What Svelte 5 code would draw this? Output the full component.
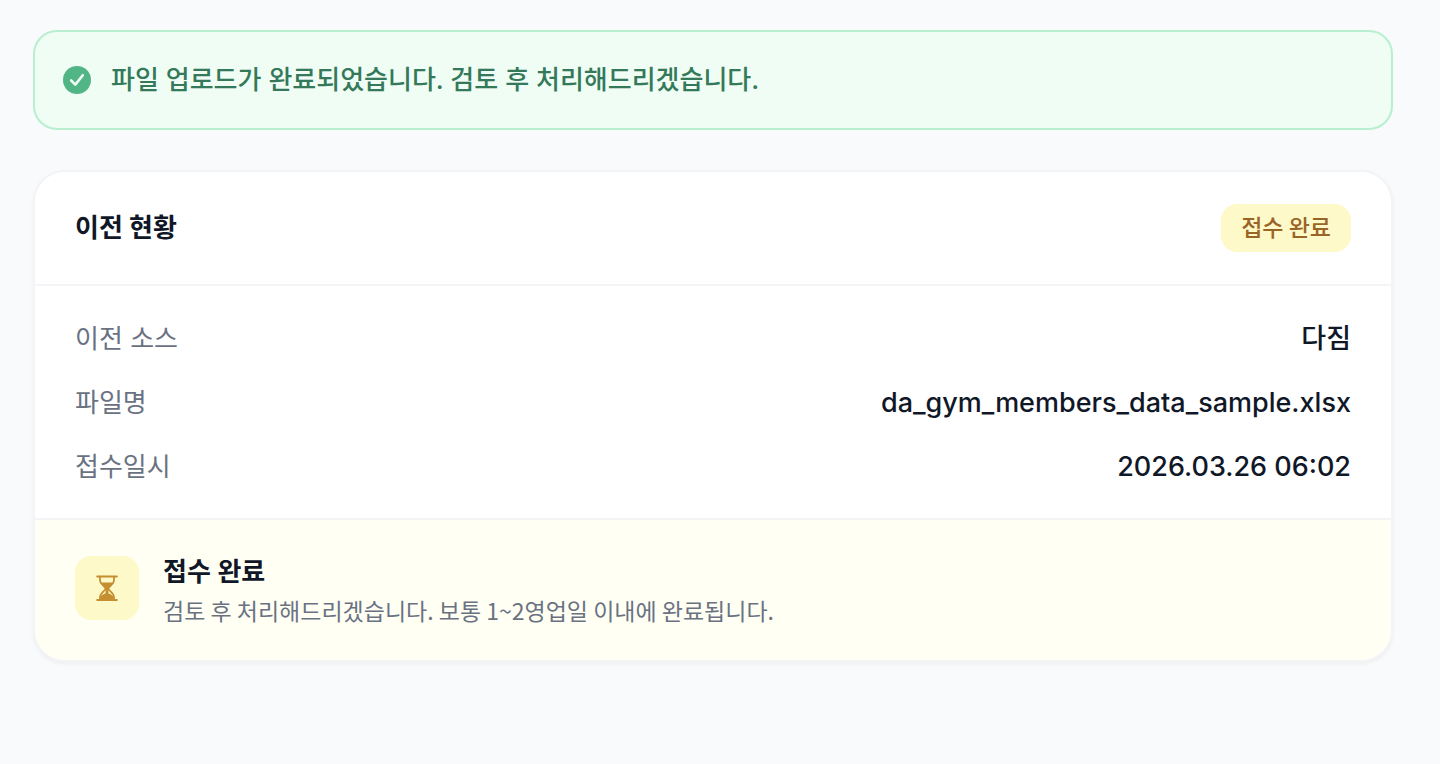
<script lang="ts">
    const status = "접수 완료";

    const rows = [
        { label: "이전 소스", value: "다짐" },
        { label: "파일명", value: "da_gym_members_data_sample.xlsx" },
        { label: "접수일시", value: "2026.03.26 06:02" },
    ];
</script>

<main>
    <div class="alert" role="status">
        <svg class="alert-icon" viewBox="0 0 28 28" aria-hidden="true">
            <circle cx="14" cy="14" r="14" fill="#52b585" />
            <path d="M8.200 14.500l4.100 4.100 7.500-9.400" fill="none" stroke="#f0fdf4" stroke-width="2.6" stroke-linecap="round" stroke-linejoin="round" />
        </svg>
        <p>파일 업로드가 완료되었습니다. 검토 후 처리해드리겠습니다.</p>
    </div>

    <section class="card">
        <header>
            <h2>이전 현황</h2>
            <span class="badge">{status}</span>
        </header>

        <dl>
            {#each rows as { label, value }}
                <div class="row">
                    <dt>{label}</dt>
                    <dd>{value}</dd>
                </div>
            {/each}
        </dl>

        <footer>
            <div class="tile">
                <svg viewBox="0 0 24 28" aria-hidden="true">
                    <path d="M2.2 2.500h19.6M2.2 26h19.6" fill="none" stroke="#c58e30" stroke-width="2" stroke-linecap="round" />
                    <path d="M5 3v3.500c0 4.500 5.500 5.500 5.500 8s-5.500 4-5.500 9v2.500M19 3v3.500c0 4.500-5.500 5.500-5.500 8s5.500 4 5.500 9v2.500" fill="none" stroke="#c58e30" stroke-width="1.8" />
                    <path d="M5.500 8.500h13c-1 3-4.500 4-5 6v5c3 .8 5 2 5.500 6H5c.5-4 2.500-5.200 5.500-6v-5c-.5-2-4-3-5-6z" fill="#c58e30" />
                </svg>
            </div>
            <div>
                <h3>{status}</h3>
                <p>검토 후 처리해드리겠습니다. 보통 1~2영업일 이내에 완료됩니다.</p>
            </div>
        </footer>
    </section>
</main>

<style>
    :global(body) {
        background: #f9fafc;
    }

    main {
        padding: 30px 47px 30px 33px;
        font-family: Inter, "Noto Sans CJK KR", sans-serif;
        font-size: 26px;
        line-height: 40px;
        color: #101828;
    }

    h2, h3, p, dl, dd {
        margin: 0;
    }

    .alert {
        display: flex;
        align-items: center;
        gap: 20px;
        padding: 28px;
        margin-bottom: 40px;
        border: 2px solid #b7efcf;
        border-radius: 24px;
        background: #f0fdf4;
        color: #34795a;
        font-weight: 500;
    }

    .alert-icon {
        width: 28px;
        height: 28px;
    }

    .card {
        overflow: hidden;
        border: 2px solid #f3f4f6;
        border-radius: 32px;
        background: white;
        box-shadow: 0 2px 4px rgba(0, 0, 0, 0.05);
    }

    header {
        display: flex;
        align-items: center;
        justify-content: space-between;
        padding: 32px 40px;
        border-bottom: 2px solid #f3f4f6;
    }

    h2, h3 {
        font-size: 26px;
        font-weight: 700;
    }

    h3 {
        font-weight: 600;
    }

    .badge, footer p {
        font-family: "Noto Sans CJK KR", sans-serif;
        font-size: 23px;
    }

    .badge {
        padding: 6px 20px 10px;
        border-radius: 16px;
        background: #fef9c8;
        color: #9a6427;
        font-weight: 500;
        line-height: 32px;
    }

    dl {
        display: flex;
        flex-direction: column;
        gap: 24px;
        padding: 33px 40px 31px;
    }

    .row {
        display: flex;
        justify-content: space-between;
    }

    dt {
        color: #6a7282;
    }

    dd {
        font-size: 27px;
        font-weight: 500;
    }

    footer {
        display: flex;
        align-items: flex-start;
        gap: 24px;
        padding: 32px 40px;
        border-top: 2px solid #f3f4f6;
        background: #fffff4;
    }

    .tile {
        display: flex;
        align-items: center;
        justify-content: center;
        width: 64px;
        height: 64px;
        margin-top: 4px;
        border-radius: 16px;
        background: #fef9c8;
    }

    .tile svg {
        width: 24px;
        height: 28px;
    }

    footer p {
        color: #6a7282;
        line-height: 36px;
    }
</style>
